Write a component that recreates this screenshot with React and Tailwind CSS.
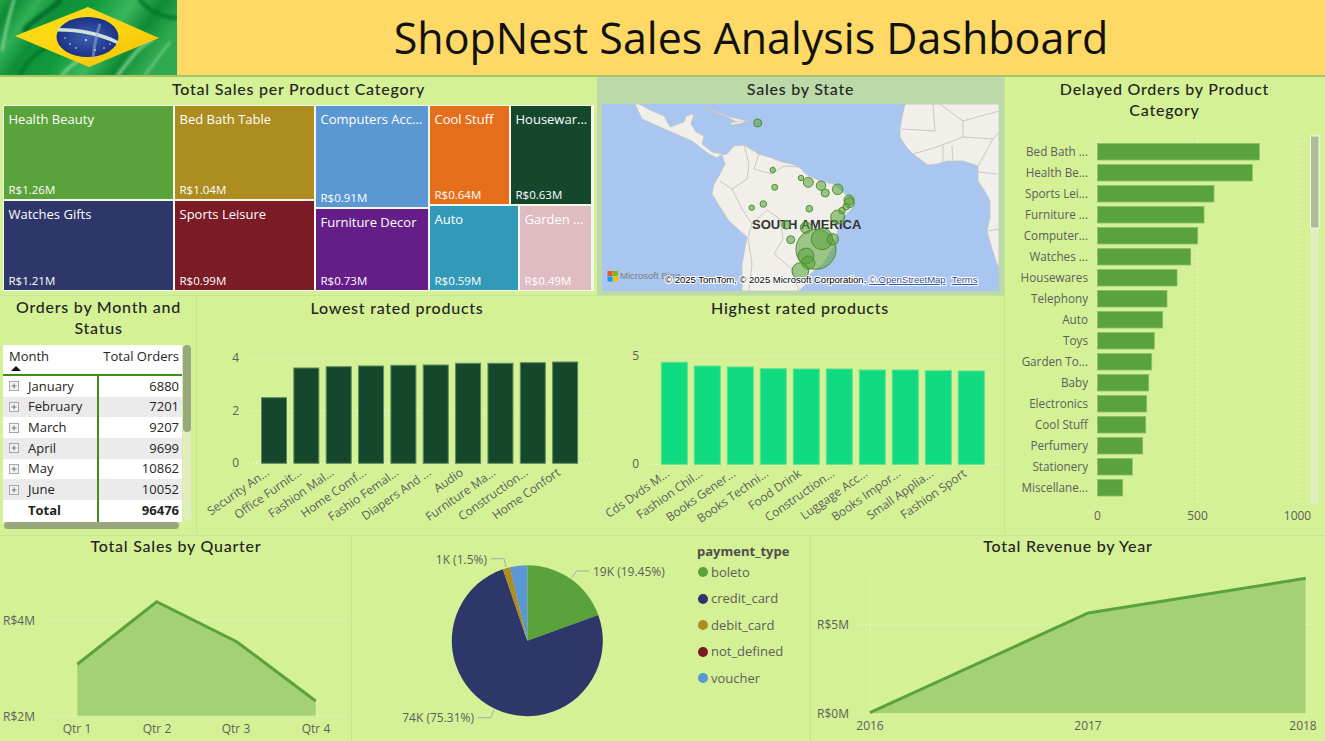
const treemapColumns = [
  {
    width: "w-[169px]",
    cells: [
      { name: "Health Beauty", value: "R$1.26M", bg: "bg-[#5aa23a]", height: "h-[93px]" },
      { name: "Watches Gifts", value: "R$1.21M", bg: "bg-[#2d3769]", height: "flex-1" },
    ],
  },
  {
    width: "w-[139px]",
    cells: [
      { name: "Bed Bath Table", value: "R$1.04M", bg: "bg-[#ad8d20]", height: "h-[93px]" },
      { name: "Sports Leisure", value: "R$0.99M", bg: "bg-[#7a1b25]", height: "flex-1" },
    ],
  },
  {
    width: "w-[112px]",
    cells: [
      { name: "Computers Acc...", value: "R$0.91M", bg: "bg-[#5b97d2]", height: "h-[101px]" },
      { name: "Furniture Decor", value: "R$0.73M", bg: "bg-[#651e87]", height: "flex-1" },
    ],
  },
];

const lowestRated = [
  ["Security An...", 397.7],
  ["Office Furnit...", 368],
  ["Fashion Mal...", 366.7],
  ["Home Comf...", 366],
  ["Fashio Femal...", 365.3],
  ["Diapers And ...", 365],
  ["Audio", 363.3],
  ["Furniture Ma...", 363.3],
  ["Construction...", 362.7],
  ["Home Confort", 362],
];

const highestRated = [
  ["Cds Dvds M...", 362.3],
  ["Fashion Chil...", 366],
  ["Books Gener...", 367],
  ["Books Techni...", 368.7],
  ["Food Drink", 369],
  ["Construction...", 369],
  ["Luggage Acc...", 370],
  ["Books Impor...", 370],
  ["Small Applia...", 370.7],
  ["Fashion Sport", 371],
];

const delayedOrders = [
  ["Bed Bath ...", 1259.3],
  ["Health Be...", 1252.3],
  ["Sports Lei...", 1214],
  ["Furniture ...", 1204],
  ["Computer...", 1197.7],
  ["Watches ...", 1190.7],
  ["Housewares", 1177],
  ["Telephony", 1167],
  ["Auto", 1162.7],
  ["Toys", 1154.3],
  ["Garden To...", 1151.7],
  ["Baby", 1148.7],
  ["Electronics", 1146.7],
  ["Cool Stuff", 1145.7],
  ["Perfumery", 1142.7],
  ["Stationery", 1132.3],
  ["Miscellane...", 1122.7],
];

const months = [
  ["January", "6880"],
  ["February", "7201"],
  ["March", "9207"],
  ["April", "9699"],
  ["May", "10862"],
  ["June", "10052"],
];

const payments = [
  ["boleto", "bg-[#5aa23a]"],
  ["credit_card", "bg-[#2d3769]"],
  ["debit_card", "bg-[#ad8d20]"],
  ["not_defined", "bg-[#7a1b25]"],
  ["voucher", "bg-[#5b97d2]"],
];

// bubbles in map pixels
const bubbles = [
  [155.7, 19, 4], [170.7, 66, 2.7], [199, 74, 2.7], [206.3, 78.3, 5], [219, 81.7, 4.7],
  [223.3, 89, 4], [235.7, 85.3, 5.3], [172.7, 83.3, 3], [161.3, 100, 3.3], [149.7, 103.7, 2.7],
  [207.3, 104.7, 3.3], [247, 96, 5], [247.3, 98.7, 5], [244, 102.7, 3.3], [240, 106.7, 3.3],
  [235.7, 113, 7], [184, 120.7, 4.3], [204, 123.7, 5.7], [188.7, 135.7, 4], [214, 145.3, 20],
  [220, 135, 10.7], [230.7, 135.3, 5.7], [204, 152, 8], [206.3, 158.7, 6.7], [198.3, 167, 8.3],
];

const land = [
  "37,0 50,7 62,12 68,23 82,18 84,12 92,10 89,20 94,28 102,32 100,40 110,48 120,50 115,54 107,50 90,37 67,27 40,15 33,0",
  "102,4 115,8 128,13 146,17 137,19 123,12",
  "128,19 138,17 142,19 130,21",
  "120,51 125,50 132,42 142,41 150,46 157,50 170,54 180,58 190,60 197,63 204,70 218,77 231,80 243,90 253,97 250,104 248,107 241,113 236,123 233,140 221,160 208,170 204,180 197,187 140,187 140,160 145,133 127,117 118,103 110,90 112,80 117,72 123,60",
  "303,0 300,13 298,25 298,33 305,44 311,50 326,61 335,60 345,57 361,57 376,62 376,77 382,86 388,97 388,113 385,127 390,145 395,160 397,163 397,0",
];

const borders = [
  "142,41 147,60 145,75 130,85 118,77",
  "157,50 152,65 170,70 182,62 197,63",
  "130,85 140,105 150,120 146,133",
  "150,120 165,106 178,115 181,135 172,150",
  "146,133 150,160 147,187",
  "172,150 190,165 197,187",
  "170,70 172,62",
  "331,0 333,27 300,25",
  "338,0 361,17 361,33 335,43 311,50",
  "361,17 397,7",
  "341,42 341,57",
  "350,42 351,57",
  "361,33 391,35 376,62",
  "376,68 395,70",
  "391,35 397,28",
  "385,127 397,125",
];

function Title({ children, className = "" }) {
  return (
    <h2 className={`text-center font-['Lato',sans-serif] font-medium text-[16px] leading-[20.5px] tracking-[0.75px] text-[#252423] ${className}`}>
      {children}
    </h2>
  );
}

function TreeCell({ name, value, bg, height }) {
  return (
    <div className={`${bg} ${height} flex flex-col justify-between overflow-hidden whitespace-nowrap px-[4.5px] pt-[4px] pb-[1px] text-white`}>
      <span className="text-[13px] leading-[18px]">{name}</span>
      <span className="text-[11.5px] leading-[16px]">{value}</span>
    </div>
  );
}

function Flag() {
  return (
    <svg width="177" height="75" viewBox="0 0 177 75" className="shrink-0">
      <defs>
        <linearGradient id="wave" x1="0" y1="0" x2="1" y2="0.3">
          <stop offset="0" stopColor="#22a347" />
          <stop offset="0.08" stopColor="#0c8a34" />
          <stop offset="0.2" stopColor="#31b055" />
          <stop offset="0.32" stopColor="#0e8f37" />
          <stop offset="0.5" stopColor="#109a3c" />
          <stop offset="0.7" stopColor="#3bb65c" />
          <stop offset="0.85" stopColor="#0d8a34" />
          <stop offset="1" stopColor="#2fa94f" />
        </linearGradient>
        <linearGradient id="sun" x1="0" y1="0" x2="1" y2="1">
          <stop offset="0" stopColor="#f5dd1c" />
          <stop offset="0.5" stopColor="#ffd60f" />
          <stop offset="1" stopColor="#f0bf0a" />
        </linearGradient>
        <radialGradient id="globe" cx="0.5" cy="0.5" r="0.6">
          <stop offset="0" stopColor="#3c5fb0" />
          <stop offset="1" stopColor="#15297c" />
        </radialGradient>
        <filter id="soft">
          <feGaussianBlur stdDeviation="1.4" />
        </filter>
      </defs>
      <rect width="177" height="75" fill="url(#wave)" />
      <g filter="url(#soft)" fill="none" strokeLinecap="round">
        <path d="M2 50 C6 30 10 12 14 0" stroke="#8ad99a" strokeWidth="2.5" />
        <path d="M62 75 C68 68 74 62 84 58" stroke="#8ad99a" strokeWidth="2.5" />
        <path d="M118 75 C128 62 140 45 152 40" stroke="#7ed190" strokeWidth="3" />
        <path d="M145 75 C155 62 162 52 170 42" stroke="#7ed190" strokeWidth="2" />
        <path d="M25 30 C32 20 50 12 60 0" stroke="#06702a" strokeWidth="5" />
        <path d="M140 0 C150 12 165 18 177 18" stroke="#067a2c" strokeWidth="4" />
        <path d="M20 75 C26 62 34 54 46 48" stroke="#067a2c" strokeWidth="4" />
      </g>
      <polygon points="15,36 88,7 159,38 89,67" fill="url(#sun)" />
      <ellipse cx="87.5" cy="37" rx="31" ry="20" fill="url(#globe)" />
      <path d="M58 28 C80 28 102 32 118 41 L117 44 C100 36 80 31.5 57.5 31.5 Z" fill="#cfe3d6" />
      <path d="M93 58 C94 48 96 36 100 24" stroke="#9fb6dc" strokeOpacity="0.5" strokeWidth="3" fill="none" />
      <g fill="#e8eef5">
        <circle cx="70" cy="44" r="0.8" />
        <circle cx="76" cy="48" r="0.8" />
        <circle cx="86" cy="40" r="1" />
        <circle cx="95" cy="50" r="0.8" />
        <circle cx="104" cy="48" r="0.8" />
        <circle cx="65" cy="38" r="0.7" />
        <circle cx="110" cy="44" r="0.7" />
      </g>
    </svg>
  );
}

function Treemap() {
  return (
    <div className="mx-[3px] flex h-[186px] gap-[2px] bg-[#f4f8ea] p-px">
      {treemapColumns.map((col) => (
        <div key={col.cells[0].name} className={`${col.width} flex flex-col gap-[2px]`}>
          {col.cells.map((cell) => (
            <TreeCell key={cell.name} {...cell} />
          ))}
        </div>
      ))}
      <div className="flex w-[161px] flex-col gap-[2px]">
        <div className="flex h-[98px] gap-[2px]">
          <div className="w-[79px]">
            <TreeCell name="Cool Stuff" value="R$0.64M" bg="bg-[#e56e1b]" height="h-full" />
          </div>
          <div className="flex-1 min-w-0">
            <TreeCell name="Housewar..." value="R$0.63M" bg="bg-[#14472c]" height="h-full" />
          </div>
        </div>
        <div className="flex flex-1 gap-[2px]">
          <div className="w-[88px]">
            <TreeCell name="Auto" value="R$0.59M" bg="bg-[#3399b8]" height="h-full" />
          </div>
          <div className="flex-1 min-w-0">
            <TreeCell name="Garden ..." value="R$0.49M" bg="bg-[#dfbcc1]" height="h-full" />
          </div>
        </div>
      </div>
    </div>
  );
}

function MapView() {
  return (
    <svg width="397" height="187" viewBox="0 0 397 187" className="mx-[5px] block bg-[#a8c6f0]">
      <g fill="#f1efe9" stroke="#c6c4be" strokeWidth="0.8" strokeLinejoin="round">
        {land.map((pts) => (
          <polygon key={pts} points={pts} />
        ))}
      </g>
      <g fill="none" stroke="#c9c7c1" strokeWidth="1">
        {borders.map((pts) => (
          <polyline key={pts} points={pts} />
        ))}
      </g>
      <text x="150" y="125" className="fill-[#333333] font-['Liberation_Sans',sans-serif] text-[13px] font-bold">SOUTH AMERICA</text>
      {bubbles.map(([cx, cy, r]) => (
        <circle key={`${cx}-${cy}`} cx={cx} cy={cy} r={r} fill="#5aa23a" fillOpacity="0.55" stroke="#4c8f2f" strokeWidth="1" />
      ))}
      <g>
        <rect x="5.5" y="167" width="5" height="5" fill="#f25022" />
        <rect x="11" y="167" width="5" height="5" fill="#7fba00" />
        <rect x="5.5" y="172.5" width="5" height="5" fill="#00a4ef" />
        <rect x="11" y="172.5" width="5" height="5" fill="#ffb900" />
      </g>
      <text x="18" y="175" className="fill-[#807f7c] text-[9.5px] font-['Liberation_Sans',sans-serif]">Microsoft Bing</text>
      <text x="63" y="179" className="fill-black stroke-white text-[9.5px] font-['Liberation_Sans',sans-serif] [paint-order:stroke] [stroke-width:2px]">
        © 2025 TomTom, © 2025 Microsoft Corporation,{" "}
        <tspan className="fill-[#2f4d9c] underline">© OpenStreetMap</tspan>
        <tspan dx="6" className="fill-[#2f4d9c] underline">Terms</tspan>
      </text>
    </svg>
  );
}

function ExpandBox() {
  return (
    <svg width="10" height="10" viewBox="0 0 10 10" className="shrink-0">
      <rect x="0.5" y="0.5" width="9" height="9" fill="#f3f3f3" stroke="#a6a6a6" />
      <path d="M2.5 5H7.5M5 2.5V7.5" stroke="#777777" />
    </svg>
  );
}

function OrdersTable() {
  return (
    <div className="relative mt-[7px] ml-[3px] h-[185px] w-[190px] text-[#252423]">
      <div className="w-[179px] bg-white text-[13px]">
        <div className="flex h-[31px] border-b-2 border-[#3f8f12]">
          <div className="w-[95px] pl-[6px] leading-[22px]">
            <div>Month</div>
            <svg width="10" height="5" viewBox="0 0 10 5" className="ml-[2px] -mt-[1px] block">
              <polygon points="5,0 10,5 0,5" fill="#111111" />
            </svg>
          </div>
          <div className="flex-1 pr-[3px] text-right leading-[22px] whitespace-nowrap">Total Orders</div>
        </div>
        {months.map(([month, total], i) => (
          <div key={month} className={`flex h-[20.7px] items-center ${i % 2 ? "bg-[#ebebeb]" : "bg-white"}`}>
            <div className="flex h-full w-[96px] items-center gap-[9px] border-r-2 border-[#3f8f12] pl-[6px]">
              <ExpandBox />
              <span>{month}</span>
            </div>
            <div className="flex-1 pr-[3px] text-right">{total}</div>
          </div>
        ))}
        <div className="flex h-[22px] items-center bg-white font-bold">
          <div className="flex h-full w-[96px] items-center border-r-2 border-[#3f8f12] pl-[25px]">Total</div>
          <div className="flex-1 pr-[3px] text-right">96476</div>
        </div>
      </div>
      <div className="absolute top-0 left-[180px] h-[175px] w-[8px] rounded-full bg-[#e3eec0]">
        <div className="h-[87px] rounded-full bg-[#98a77c]" />
      </div>
      <div className="absolute top-[177px] left-[1px] h-[7px] w-[175px] rounded-full bg-[#98a77c]" />
    </div>
  );
}

function ColumnChart({ box, data, left, pitch, barWidth, base, grid, ticks, x1, x2, fill, border }) {
  const vw = box[2];
  const vh = box[3];
  return (
    <svg width={vw} height={vh} viewBox={box.join(" ")} className="block">
      {grid.map((y) => (
        <line key={y} x1={x1} x2={x2} y1={y} y2={y} stroke="#ffffff" strokeOpacity="0.8" strokeDasharray="1 3" />
      ))}
      {ticks.map(([label, y]) => (
        <text key={label} x={x1 - 9} y={y + 4} textAnchor="end" className="fill-[#605e5c] text-[12px]">{label}</text>
      ))}
      {data.map(([label, top], i) => {
        const x = left + i * pitch;
        const tx = x + barWidth / 2 - 4;
        return (
          <g key={label}>
            <rect x={x} y={top} width={barWidth} height={base - top} fill={fill} stroke={border} strokeWidth="1" />
            <text x={tx} y={base + 11} textAnchor="end" transform={`rotate(-35 ${tx} ${base + 11})`} className="fill-[#605e5c] text-[12px]">{label}</text>
          </g>
        );
      })}
    </svg>
  );
}

function DelayedChart() {
  return (
    <svg width="321" height="408" viewBox="1004 127 321 408" className="block">
      {[1097.3, 1197.5, 1297.7].map((x) => (
        <line key={x} x1={x} x2={x} y1="136" y2="504" stroke="#ffffff" strokeOpacity="0.8" strokeDasharray="1 3" />
      ))}
      {delayedOrders.map(([label, end], i) => {
        const y = 143.5 + i * 21;
        return (
          <g key={label}>
            <text x="1088" y={y + 12.5} textAnchor="end" className="fill-[#605e5c] text-[11.7px]">{label}</text>
            <rect x="1097.5" y={y} width={end - 1097.5} height="16.5" fill="#5aa23a" stroke="#86c167" strokeWidth="0.8" />
          </g>
        );
      })}
      {[["0", 1097.5], ["500", 1197.5], ["1000", 1297.5]].map(([label, x]) => (
        <text key={label} x={x} y="520" textAnchor="middle" className="fill-[#605e5c] text-[12px]">{label}</text>
      ))}
      <rect x="1310.5" y="136" width="8.5" height="368" fill="#e3eec0" />
      <rect x="1310.5" y="136" width="8.5" height="92" fill="#b0bb9b" stroke="#ffffff" strokeWidth="0.8" />
    </svg>
  );
}

function QuarterChart() {
  const points = "77.3,664.3 156.7,601.7 236.7,641.7 315.7,701";
  return (
    <svg width="351" height="180" viewBox="0 561 351 180" className="block">
      {[619.3, 715.7].map((y) => (
        <line key={y} x1="45" x2="347" y1={y} y2={y} stroke="#ffffff" strokeOpacity="0.8" strokeDasharray="1 3" />
      ))}
      <polygon points={`77.3,715.7 ${points} 315.7,715.7`} fill="#a3d174" />
      <polyline points={points} fill="none" stroke="#5aa23a" strokeWidth="3" />
      <text x="3" y="625" className="fill-[#605e5c] text-[12px]">R$4M</text>
      <text x="3" y="721" className="fill-[#605e5c] text-[12px]">R$2M</text>
      {[["Qtr 1", 77], ["Qtr 2", 157], ["Qtr 3", 236], ["Qtr 4", 316]].map(([label, x]) => (
        <text key={label} x={x} y="733" textAnchor="middle" className="fill-[#605e5c] text-[12px]">{label}</text>
      ))}
    </svg>
  );
}

function slicePath(cx, cy, r, from, to) {
  const point = (p) => {
    const a = (p / 100) * 2 * Math.PI;
    return `${cx + r * Math.sin(a)} ${cy - r * Math.cos(a)}`;
  };
  return `M${cx} ${cy}L${point(from)}A${r} ${r} 0 ${to - from > 50 ? 1 : 0} 1 ${point(to)}Z`;
}

function PaymentChart() {
  const slices = [
    [0, 19.45, "#5aa23a"],
    [19.45, 94.76, "#2d3769"],
    [94.76, 96.26, "#ad8d20"],
    [96.26, 96.3, "#7a1b25"],
    [96.3, 100, "#5b97d2"],
  ];
  return (
    <div className="flex h-full">
      <svg width="345" height="206" viewBox="352 535 345 206" className="block shrink-0">
        {slices.map(([from, to, color]) => (
          <path key={color} d={slicePath(527.3, 639.7, 75.5, from, to)} fill={color} />
        ))}
        <g fill="none" stroke="#a9a9a0" strokeWidth="1">
          <polyline points="571.7,576.7 576.7,570 589,570" />
          <polyline points="491.3,557.7 504,557.7 506,566" />
          <polyline points="478,716.7 490.7,716.7 494,709.3" />
        </g>
        <g className="fill-[#605e5c] text-[12px]">
          <text x="593" y="575">19K (19.45%)</text>
          <text x="487" y="563" textAnchor="end">1K (1.5%)</text>
          <text x="474" y="721" textAnchor="end">74K (75.31%)</text>
        </g>
      </svg>
      <div className="pt-[6px] text-[13px] text-[#605e5c]">
        <div className="h-[17px] font-bold leading-[18px] text-[#504e4c]">payment_type</div>
        {payments.map(([name, bg]) => (
          <div key={name} className="flex h-[26.5px] items-center gap-[3px] pl-px">
            <span className={`${bg} h-[10px] w-[10px] rounded-full`} />
            <span>{name}</span>
          </div>
        ))}
      </div>
    </div>
  );
}

function RevenueChart() {
  const points = "870,712.7 1088.3,613 1305.7,578.3";
  return (
    <svg width="514" height="180" viewBox="811 561 514 180" className="block">
      {[624.7, 713.3].map((y) => (
        <line key={y} x1="858" x2="1316" y1={y} y2={y} stroke="#ffffff" strokeOpacity="0.8" strokeDasharray="1 3" />
      ))}
      {[870, 1088, 1306].map((x) => (
        <line key={x} x1={x} x2={x} y1="573" y2="713" stroke="#ffffff" strokeOpacity="0.8" strokeDasharray="1 3" />
      ))}
      <polygon points={`${points} 1305.7,713.3 870,713.3`} fill="#a3d174" />
      <polyline points={points} fill="none" stroke="#5aa23a" strokeWidth="3" />
      <text x="817" y="629" className="fill-[#605e5c] text-[12px]">R$5M</text>
      <text x="817" y="718" className="fill-[#605e5c] text-[12px]">R$0M</text>
      {[["2016", 870], ["2017", 1088], ["2018", 1303]].map(([label, x]) => (
        <text key={label} x={x} y="730" textAnchor="middle" className="fill-[#605e5c] text-[12px]">{label}</text>
      ))}
    </svg>
  );
}

export default function App() {
  return (
    <div className="flex h-[741px] w-[1325px] flex-col overflow-hidden bg-[#d4f196] font-['Open_Sans',sans-serif]">
      <header className="flex h-[77px] shrink-0 border-b-2 border-[#a9c463] bg-[#ffd966]">
        <Flag />
        <h1 className="flex-1 text-center text-[43px] leading-[76px] text-[#111111]">ShopNest Sales Analysis Dashboard</h1>
      </header>

      <div className="flex h-[458px] shrink-0">
        <div className="flex w-[1004px] flex-col">
          <div className="flex h-[219px] border-b border-[#c5e59a]">
            <section className="w-[597px] pt-[2px]">
              <Title className="h-[26px]">Total Sales per Product Category</Title>
              <Treemap />
            </section>
            <section className="w-[407px] bg-[#bcd9a9] pt-[2px]">
              <Title className="h-[25px]">Sales by State</Title>
              <MapView />
            </section>
          </div>
          <div className="flex flex-1">
            <section className="w-[197px] pt-[1px] shadow-[inset_-1px_0_0_#c5e59a]">
              <Title className="mx-auto w-[180px]">Orders by Month and Status</Title>
              <OrdersTable />
            </section>
            <section className="w-[403px]">
              <Title className="h-[27px] pt-[2px] pr-[3px]">Lowest rated products</Title>
              <ColumnChart
                box={[197, 323, 403, 212]}
                data={lowestRated}
                left={261.5}
                pitch={32.35}
                barWidth={25}
                base={463.3}
                grid={[358, 410.5, 463.3]}
                ticks={[["4", 358], ["2", 410.5], ["0", 463.3]]}
                x1={248}
                x2={590}
                fill="#14472c"
                border="#5f8a5d"
              />
            </section>
            <section className="w-[404px]">
              <Title className="h-[27px] pt-[2px] pr-[4px]">Highest rated products</Title>
              <ColumnChart
                box={[600, 323, 404, 212]}
                data={highestRated}
                left={661.3}
                pitch={33}
                barWidth={26}
                base={464.3}
                grid={[355.7, 464.3]}
                ticks={[["5", 355.7], ["0", 464.3]]}
                x1={648}
                x2={997}
                fill="#10db80"
                border="#5fe08f"
              />
            </section>
          </div>
        </div>
        <section className="flex-1 pt-[2px] shadow-[inset_1px_0_0_#c5e59a]">
          <Title className="mx-auto h-[48px] w-[240px]">Delayed Orders by Product Category</Title>
          <DelayedChart />
        </section>
      </div>

      <div className="flex flex-1 border-t border-[#c5e59a]">
        <section className="w-[352px] shadow-[inset_-1px_0_0_#c5e59a]">
          <Title className="h-[25px]">Total Sales by Quarter</Title>
          <QuarterChart />
        </section>
        <section className="w-[459px] shadow-[inset_-1px_0_0_#c5e59a]">
          <PaymentChart />
        </section>
        <section className="flex-1">
          <Title className="h-[25px]">Total Revenue by Year</Title>
          <RevenueChart />
        </section>
      </div>
    </div>
  );
}
